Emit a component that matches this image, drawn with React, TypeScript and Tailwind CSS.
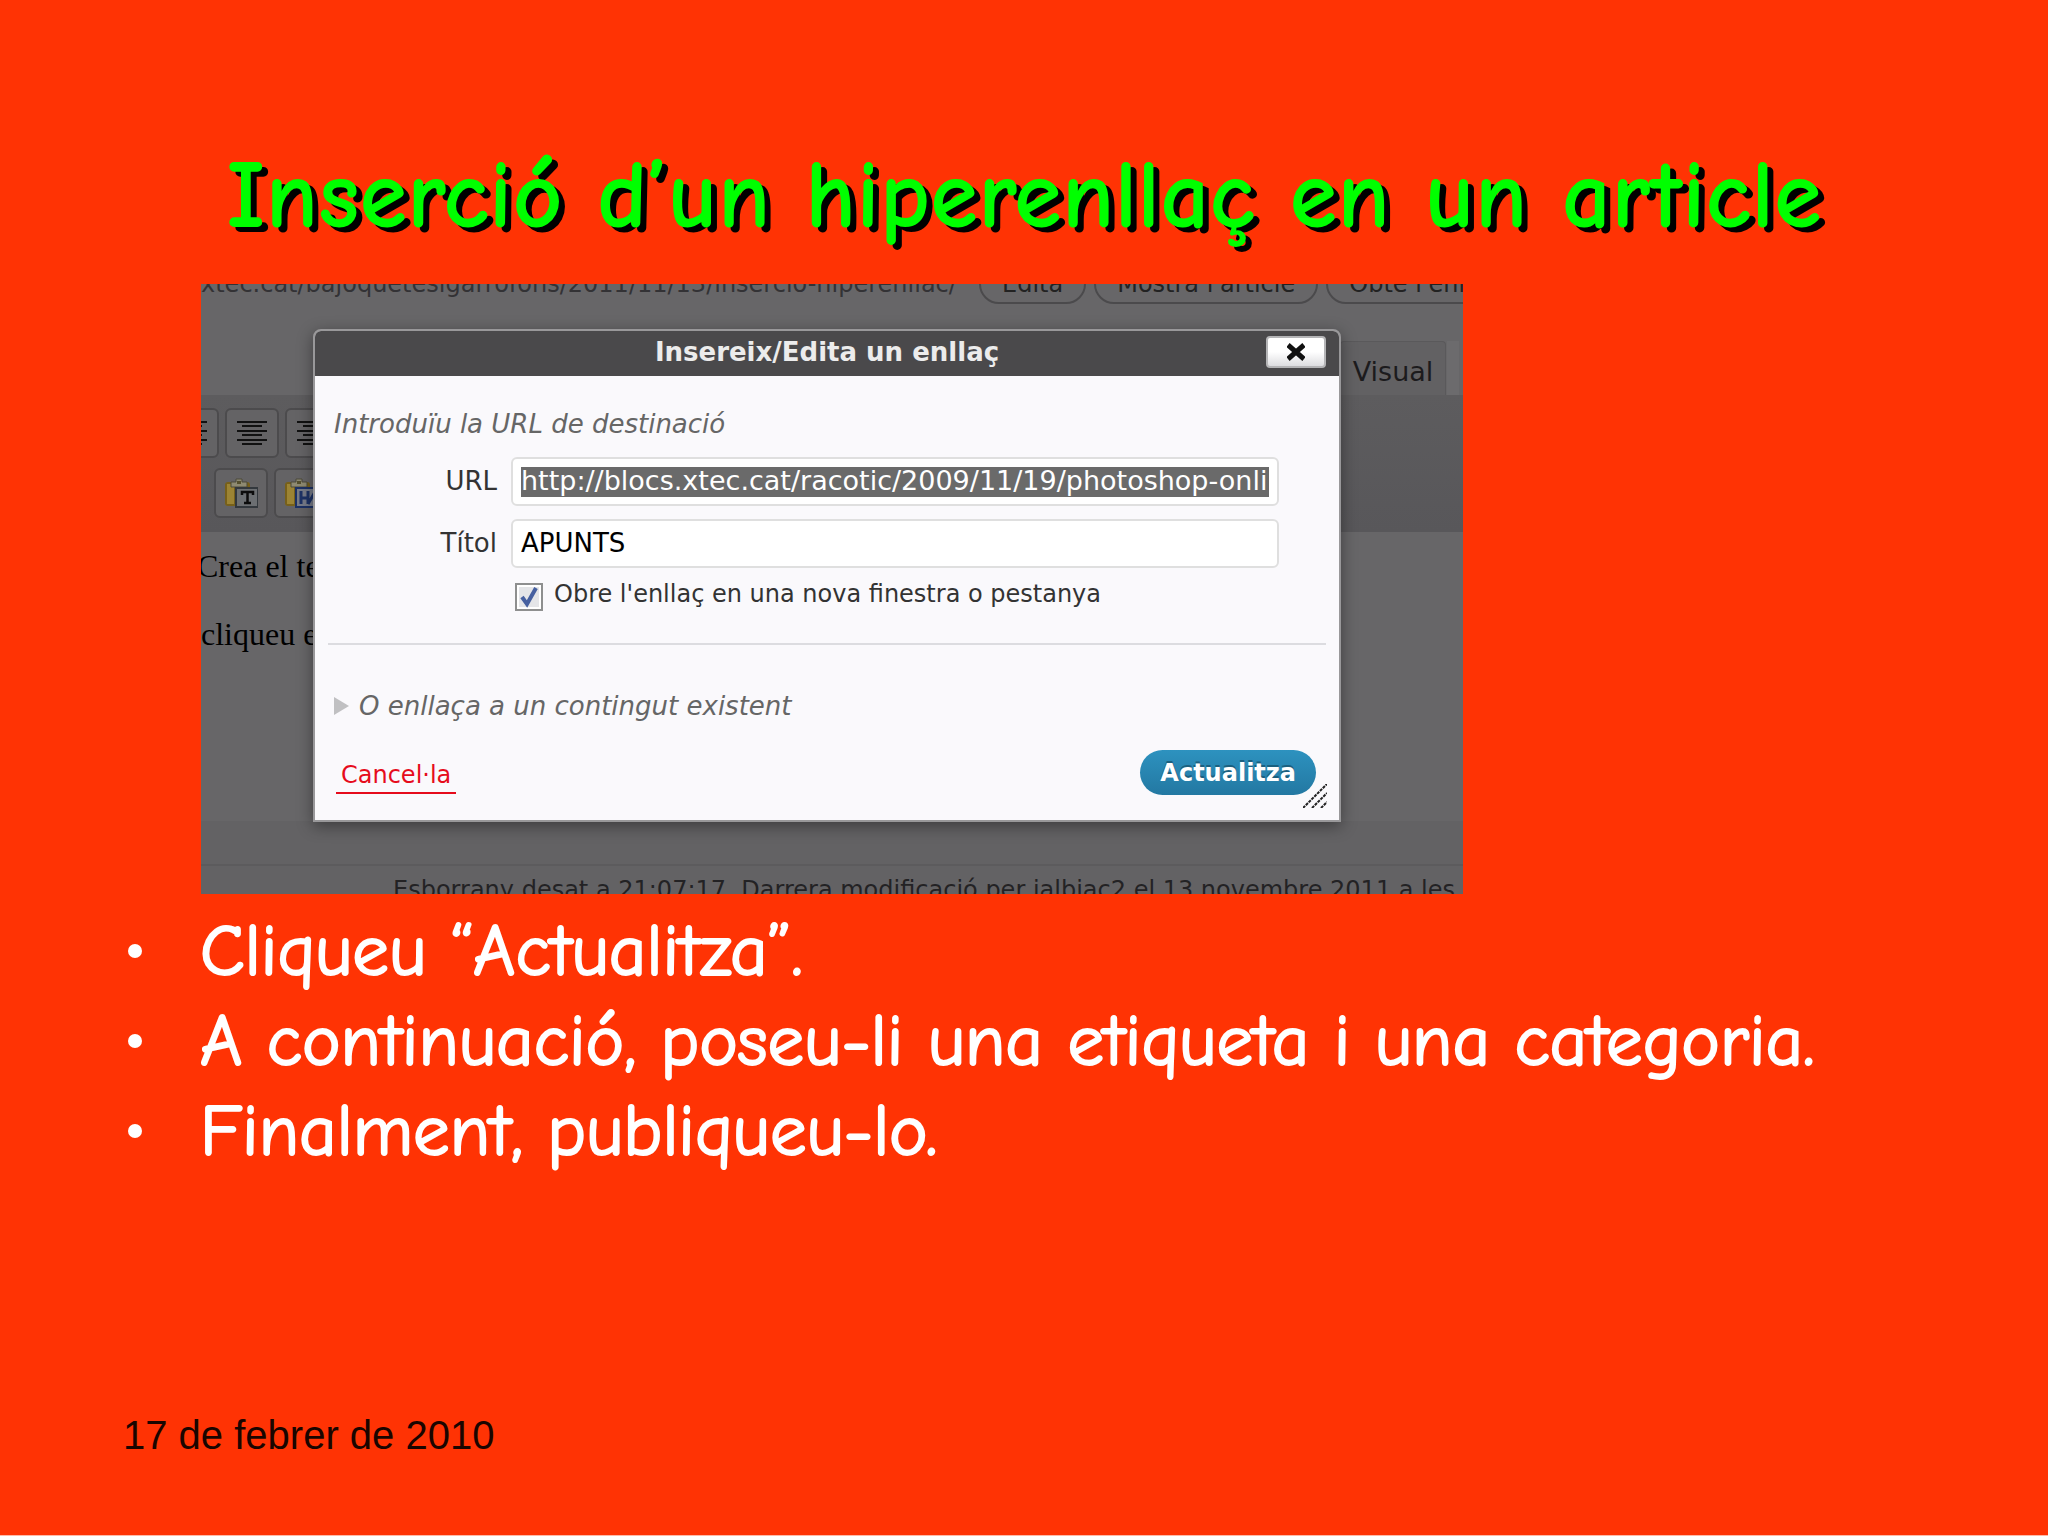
import React from "react";

function AlignLines({ right = false }: { right?: boolean }) {
  return (
    <svg width="30" height="26" viewBox="0 0 30 26" stroke="#111" strokeWidth="2" aria-hidden="true">
      {right ? (
        <path d="M0 2H30M6 6H30M0 11H30M6 15H30M0 20H30M6 24H30" />
      ) : (
        <path d="M0 2H30M5 6H25M0 11H30M5 15H25M0 20H30M5 24H25" />
      )}
    </svg>
  );
}

function Clipboard({ word = false }: { word?: boolean }) {
  return (
    <svg width="34" height="30" viewBox="0 0 34 30" aria-hidden="true">
      <rect x="1" y="4" width="25" height="24" rx="3" fill="#77601a" />
      <rect x="3" y="6" width="7" height="20" fill="#9c8434" />
      <path d="M7 9V4h5V1h6v3h5v5z" fill="#8e8a72" stroke="#4c4a3a" />
      <rect x="13" y="3" width="4" height="3" fill="#55502f" />
      <rect x="12" y="10" width="22" height="19" fill={word ? "#767b88" : "#6c6f72"} stroke={word ? "#1d3265" : "#33383d"} strokeWidth="2" />
      {word ? (
        <path d="M17 13v13M24 13v13M31 13v13M17 20h7M24 26l7-12" fill="none" stroke="#1d3265" strokeWidth="3" />
      ) : (
        <path d="M18 17v-3h11v3M23.500 14v11M20 25h7" fill="none" stroke="#0c0c0c" strokeWidth="2.500" />
      )}
    </svg>
  );
}

function ToolButton({ label, children }: { label: string; children: React.ReactNode }) {
  return (
    <button aria-label={label} className="flex h-[50px] w-[54px] shrink-0 items-center justify-center rounded-md border-2 border-[#4c4b4d] bg-[#646365]">
      {children}
    </button>
  );
}

function EditorPage() {
  const pill = "h-10 shrink-0 rounded-full border-2 border-[#4b4a4c] px-[21px] text-[#222]";
  return (
    <div className="flex h-[610px] flex-col bg-[#676668] text-[#232224]">
      <div className="-mt-5 flex h-[77px] shrink-0 items-start gap-2 whitespace-nowrap text-2xl">
        <span className="w-[770px] shrink-0 leading-10 text-[#333235]">xtec.cat/bajoquetesigarrofons/2011/11/13/insercio-hiperenllac/</span>
        <button className={pill}>Edita</button>
        <button className={pill}>Mostra l'article</button>
        <button className={pill}>Obté l'enllaç curt</button>
      </div>
      <div className="flex h-[54px] shrink-0 justify-end gap-[1px] pr-1">
        <button className="w-[106px] rounded-t border border-b-0 border-[#5a595b] bg-[#626163] pt-2 text-[27px] text-[#1c1b1d]">Visual</button>
        <button aria-label="HTML" className="w-3 bg-[#6c6b6d]" />
      </div>
      <div className="flex h-[137px] shrink-0 flex-col gap-[10px] bg-gradient-to-b from-[#5d5c5e] to-[#58575a] pt-[13px]">
        <div className="-ml-9 flex gap-[6px]">
          <ToolButton label="Alinea a l'esquerra"><AlignLines /></ToolButton>
          <ToolButton label="Centra"><AlignLines /></ToolButton>
          <ToolButton label="Alinea a la dreta"><AlignLines right /></ToolButton>
        </div>
        <div className="ml-[13px] flex gap-[6px]">
          <ToolButton label="Enganxa com a text"><Clipboard /></ToolButton>
          <ToolButton label="Enganxa des del Word"><Clipboard word /></ToolButton>
        </div>
      </div>
      <div className="-ml-1 flex h-[289px] shrink-0 flex-col gap-7 pt-[14px] font-['Liberation_Serif',serif] text-[32px] leading-10 text-black">
        <p>Crea el text</p>
        <p className="pl-1">cliqueu el</p>
      </div>
      <div className="h-[45px] shrink-0 border-b-2 border-[#5c5b5d] bg-[#636264]" />
      <p className="grow bg-[#636264] pt-2 pl-48 text-2xl leading-8 whitespace-nowrap">
        Esborrany desat a 21:07:17. Darrera modificació per jalbiac2 el 13 novembre 2011 a les
      </p>
    </div>
  );
}

function LinkDialog() {
  const field = "flex h-[49px] w-[768px] items-center rounded-md border-2 border-[#dfdfdf] bg-white px-2";
  return (
    <div role="dialog" aria-labelledby="dlg-title" className="absolute top-[45px] left-[112px] w-[1028px] rounded-t-lg border-2 border-[#99989a] bg-[#faf9fc] text-[#333] shadow-[0_4px_16px_rgba(0,0,0,0.4)]">
      <div className="grid h-[45px] grid-cols-[1fr_auto_1fr] items-center rounded-t-md bg-[#4a494b] px-[13px] pb-[3px]">
        <span />
        <h2 id="dlg-title" className="text-[26px] leading-10 font-bold text-[#ececec]">Insereix/Edita un enllaç</h2>
        <button aria-label="Tanca" className="flex h-8 w-[60px] items-center justify-center justify-self-end rounded-sm border-2 border-[#b5b5b7] bg-gradient-to-b from-white from-50% to-[#dddde0]">
          <svg width="18" height="18" viewBox="0 0 18 18" stroke="#111" strokeWidth="5" aria-hidden="true"><path d="M1 2L17 16M17 2L1 16" /></svg>
        </button>
      </div>
      <div className="px-[19px] pt-8">
        <p className="text-[26px] leading-8 italic text-[#666]">Introduïu la URL de destinació</p>
        <div className="mt-[17px] flex items-center gap-[14px] text-[26px]">
          <label htmlFor="url" className="w-[163px] text-right">URL</label>
          <div className={field}>
            <input id="url" className="h-[30px] w-full min-w-0 bg-[#6a6a6a] text-[27px] text-white" defaultValue="http://blocs.xtec.cat/racotic/2009/11/19/photoshop-online" />
          </div>
        </div>
        <div className="mt-[13px] flex items-center gap-[14px] text-[26px]">
          <label htmlFor="titol" className="w-[163px] text-right">Títol</label>
          <div className={field}>
            <input id="titol" className="w-full min-w-0 text-black" defaultValue="APUNTS" />
          </div>
        </div>
        <label className="mt-[15px] ml-[181px] flex items-start gap-[11px] text-2xl leading-[22px]">
          <span className="relative flex">
            <input type="checkbox" defaultChecked className="size-7 appearance-none border-2 border-[#8e8f8f] bg-[#e4e5e8] shadow-[inset_0_0_0_2px_#fff]" />
            <svg className="pointer-events-none absolute inset-0" width="28" height="28" viewBox="0 0 28 28" fill="none" stroke="#4660a0" strokeWidth="4" aria-hidden="true"><path d="M7 14L12 21L21 5" /></svg>
          </span>
          Obre l'enllaç en una nova finestra o pestanya
        </label>
      </div>
      <hr className="mx-[13px] mt-8 border-t-2 border-[#dcdce0]" />
      <button className="mt-[45px] ml-[19px] flex items-center gap-[10px] text-[26px] leading-8 italic text-[#666]">
        <svg width="15" height="18" viewBox="0 0 15 18" fill="#c0c0c2" aria-hidden="true"><path d="M0 0L15 9L0 18z" /></svg>
        O enllaça a un contingut existent
      </button>
      <div className="mt-[28px] flex h-[70px] items-start justify-between pr-[23px] pl-[21px]">
        <a href="#cancel" className="mt-2 border-b-2 border-[#e60c1c] px-[5px] text-2xl leading-[34px] text-[#e60c1c]">Cancel·la</a>
        <button className="h-[45px] rounded-full bg-gradient-to-b from-[#2d92bf] to-[#2378a2] px-5 text-2xl font-bold text-white [text-shadow:0_-2px_0_#1b607f]">Actualitza</button>
      </div>
      <svg className="absolute right-3 bottom-3" width="24" height="24" viewBox="0 0 24 24" stroke="#222" strokeWidth="2" strokeDasharray="3 1" aria-hidden="true"><path d="M0 24L24 0M9 24L24 9M18 24L24 18" /></svg>
    </div>
  );
}

export default function App() {
  return (
    <main className="flex min-h-screen flex-col border-b border-[#ffb9a8] bg-[#ff3304] font-['Liberation_Sans',sans-serif]">
      <h1 className="pt-[132px] text-center font-['Comic_Sans_MS','Comic_Neue',Lato,sans-serif] text-[97px] leading-[128px] font-bold whitespace-nowrap text-[#00ff00] [text-shadow:6px_5px_0_#000]">
        Inserció d’un hiperenllaç en un article
      </h1>
      <section className="relative mt-6 ml-[201px] w-[1262px] overflow-hidden font-['DejaVu_Sans',sans-serif]">
        <EditorPage />
        <LinkDialog />
      </section>
      <ul className="mt-3 flex flex-col pl-[128px] font-['Comic_Sans_MS','Comic_Neue',Lato,sans-serif] text-[73px] leading-[90px] whitespace-nowrap text-white [-webkit-text-stroke:2px_#fff]">
        {["Cliqueu “Actualitza”.", "A continuació, poseu-li una etiqueta i una categoria.", "Finalment, publiqueu-lo."].map((t) => (
          <li key={t} className="flex items-center gap-[58px]">
            <span className="size-[14px] rounded-full bg-white" />
            {t}
          </li>
        ))}
      </ul>
      <footer className="mt-auto pb-[76px] pl-[123px] text-[40px] leading-12 text-[#1a0500]">17 de febrer de 2010</footer>
    </main>
  );
}
